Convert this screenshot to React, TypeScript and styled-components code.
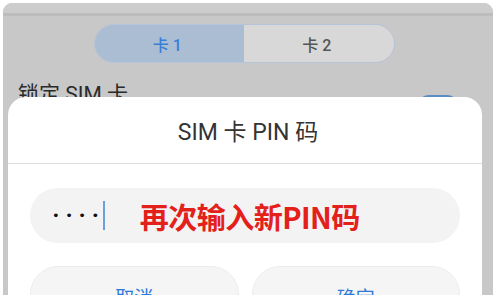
import React from "react";
import styled, { createGlobalStyle } from "styled-components";

const Global = createGlobalStyle`
  html, body { margin: 0; padding: 0; background: #ffffff; }
  body { font-family: Roboto, "Noto Sans CJK SC", sans-serif; }
`;

const Page = styled.div`
  width: 500px;
  height: 295px;
  overflow: hidden;
  background: #ffffff;
  padding: 3px 7px 0 3px;
  box-sizing: border-box;
`;

const Screen = styled.div`
  position: relative;
  height: 292px;
  background: #c8c8c8;
  border-radius: 9px 9px 0 0;
  overflow: hidden;
  display: flex;
  flex-direction: column;
`;

const StatusBar = styled.div`
  height: 10px;
  background: #cdcdcd;
  border-bottom: 3px solid #bcbcbc;
`;

const Segmented = styled.div`
  align-self: center;
  margin: 8px 0 0 -8px;
  width: 301px;
  height: 39px;
  display: flex;
  border: 1px solid #b5c4d8;
  border-radius: 20px;
  overflow: hidden;
  box-sizing: border-box;
`;

const Segment = styled.div<{ $active?: boolean }>`
  flex: 1;
  display: flex;
  align-items: center;
  justify-content: center;
  background: ${(p) => (p.$active ? "#aabdd3" : "#d8d8d8")};
  color: ${(p) => (p.$active ? "#3a7fd6" : "#555555")};
  font-size: 16px;
  font-weight: 500;
  padding-right: 4px;
`;

const SettingRow = styled.div`
  display: flex;
  align-items: flex-start;
  justify-content: space-between;
  padding: 19px 35px 0 15px;
`;

const RowLabel = styled.div`
  font-size: 21px;
  color: #2a2a2a;
  line-height: 24px;
`;

const Toggle = styled.div`
  margin-top: 13px;
  width: 40px;
  height: 22px;
  border-radius: 11px;
  background: #5b8cc4;
`;

const Dialog = styled.div`
  position: absolute;
  left: 5px;
  right: 11px;
  top: 94px;
  bottom: -40px;
  background: #ffffff;
  border-radius: 18px;
  display: flex;
  flex-direction: column;
`;

const Title = styled.div`
  height: 66px;
  display: flex;
  align-items: center;
  justify-content: center;
  font-size: 23px;
  color: #333333;
  border-bottom: 1px solid #dedede;
  padding-left: 6px;
`;

const Body = styled.div`
  padding: 24px 22px 0 22px;
  display: flex;
  flex-direction: column;
  gap: 23px;
`;

const InputPill = styled.div`
  height: 55px;
  border-radius: 28px;
  background: #f3f3f3;
  display: flex;
  align-items: center;
  padding-left: 22px;
`;

const Dots = styled.span`
  font-size: 13px;
  letter-spacing: 5.5px;
  color: #111111;
  font-family: "DejaVu Sans", sans-serif;
`;

const Caret = styled.span`
  width: 2px;
  height: 29px;
  background: #6b9fdd;
  margin-left: -2px;
`;

const Hint = styled.span`
  margin-left: 35px;
  font-size: 29px;
  font-weight: 700;
  color: #e4201b;
  font-family: "Noto Sans CJK SC", sans-serif;
  letter-spacing: -0.5px;
`;

const Buttons = styled.div`
  display: flex;
  gap: 13px;
`;

const Button = styled.div`
  flex: 1;
  height: 58px;
  border-radius: 28px;
  background: #f5f5f5;
  border: 1px solid #ececec;
  display: flex;
  align-items: center;
  justify-content: center;
  font-size: 19px;
  color: #2f7ad6;
  font-family: "Noto Sans CJK SC", sans-serif;
`;

export default function App() {
  return (
    <Page>
      <Global />
      <Screen>
        <StatusBar />
        <Segmented>
          <Segment $active>卡 1</Segment>
          <Segment>卡 2</Segment>
        </Segmented>
        <SettingRow>
          <RowLabel>锁定 SIM 卡</RowLabel>
          <Toggle />
        </SettingRow>
        <Dialog>
          <Title>SIM 卡 PIN 码</Title>
          <Body>
            <InputPill>
              <Dots>••••</Dots>
              <Caret />
              <Hint>再次输入新PIN码</Hint>
            </InputPill>
            <Buttons>
              <Button>取消</Button>
              <Button>确定</Button>
            </Buttons>
          </Body>
        </Dialog>
      </Screen>
    </Page>
  );
}
